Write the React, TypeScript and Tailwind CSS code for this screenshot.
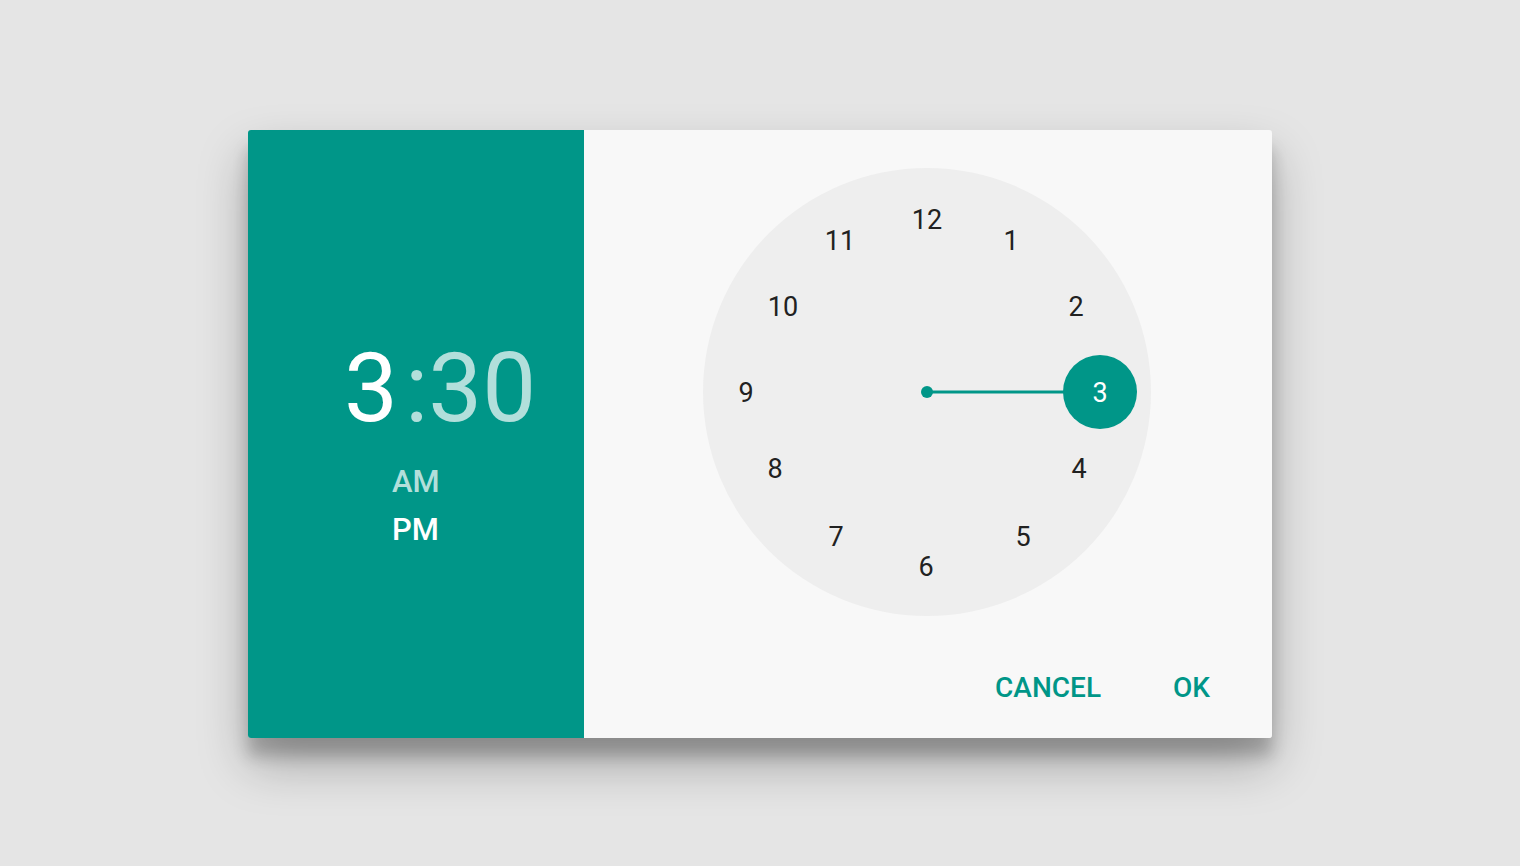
import { FC } from 'react';

const SELECTED = 3;
// label offsets from the clock centre, in px
const HOURS: { h: number; x: number; y: number }[] = [
  { h: 12, x: 0, y: -172 },
  { h: 1, x: 84, y: -151 },
  { h: 2, x: 149, y: -85 },
  { h: 3, x: 173, y: 1 },
  { h: 4, x: 152, y: 77 },
  { h: 5, x: 96, y: 145 },
  { h: 6, x: -1, y: 175 },
  { h: 7, x: -91, y: 145 },
  { h: 8, x: -152, y: 77 },
  { h: 9, x: -181, y: 1 },
  { h: 10, x: -144, y: -85 },
  { h: 11, x: -87, y: -151 },
];

const ClockFace: FC = () => {
  return (
    <div className="relative w-[448px] h-[448px] rounded-full bg-[#eeeeee]">
      <svg className="absolute inset-0" width={448} height={448} viewBox="0 0 448 448">
        <line x1={224} y1={224} x2={397} y2={224} stroke="#009688" strokeWidth={3} />
        <circle cx={224} cy={224} r={6} fill="#009688" />
        <circle cx={397} cy={224} r={37} fill="#009688" />
      </svg>
      {HOURS.map(({ h, x, y }) => (
        <span
          key={h}
          className={`absolute -translate-x-1/2 -translate-y-1/2 text-[27px] leading-none ${
            h === SELECTED ? 'text-white' : 'text-[#212121]'
          }`}
          style={{ left: 224 + x, top: 224 + y }}
        >
          {h}
        </span>
      ))}
    </div>
  );
};

const App: FC = () => {
  return (
    <div className="w-full h-[866px] bg-[#e5e5e5] flex items-start justify-center pt-[130px] font-['Roboto',sans-serif]">
      <div className="flex w-[1024px] h-[608px] rounded-[3px] overflow-hidden shadow-[0_26px_50px_rgba(0,0,0,0.28),0_18px_16px_rgba(0,0,0,0.2)]">
        <div className="w-[336px] bg-[#009688] flex flex-col">
          <div className="mt-[210px] ml-[96px] text-[96px] leading-[96px] whitespace-nowrap">
            <span className="text-white">3</span>
            <span className="text-[#b2dfdb] ml-[7px]">:</span>
            <span className="text-[#b2dfdb]">30</span>
          </div>
          <div className="mt-[30px] ml-[144px] text-[31px] leading-[31px] font-medium text-[#b2dfdb]">AM</div>
          <div className="mt-[17px] ml-[144px] text-[31px] leading-[31px] font-medium text-white">PM</div>
        </div>
        <div className="flex-1 bg-[#f8f8f8] flex flex-col items-center pt-[38px]">
          <div className="-translate-x-px">
            <ClockFace />
          </div>
          <div className="self-stretch flex justify-end items-center gap-[72px] pr-[62px] mt-[58px]">
            <button className="text-[28px] leading-none font-medium text-[#009688]">CANCEL</button>
            <button className="text-[28px] leading-none font-medium text-[#009688]">OK</button>
          </div>
        </div>
      </div>
    </div>
  );
};

export default App;
